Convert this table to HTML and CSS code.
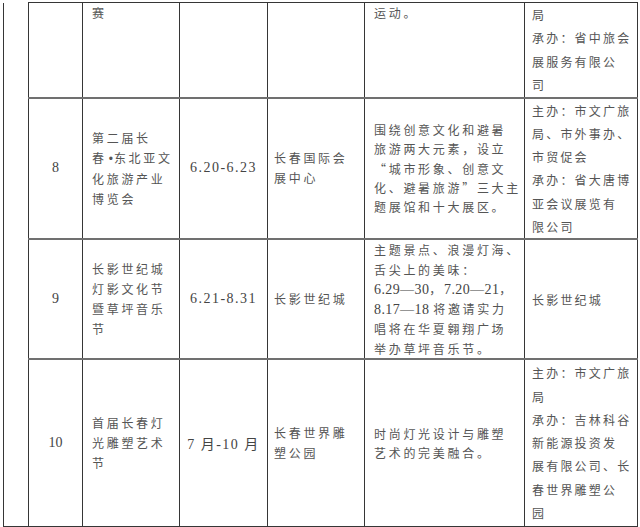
FILE: index.html
```html
<!DOCTYPE html>
<html lang="zh-CN">
<head>
<meta charset="utf-8">
<title>活动安排表</title>
<link rel="stylesheet" href="styles.css">
</head>
<body>
<table class="sched">
  <colgroup>
    <col class="c-side">
    <col class="c-no">
    <col class="c-name">
    <col class="c-date">
    <col class="c-loc">
    <col class="c-desc">
    <col class="c-org">
  </colgroup>
  <tbody>
    <tr class="r0">
      <td class="side" rowspan="4"></td>
      <td class="no"></td>
      <td class="name top">赛</td>
      <td class="date"></td>
      <td class="loc"></td>
      <td class="desc top">运动。</td>
      <td class="org">局<br>承办：省中旅会<br>展服务有限公<br>司</td>
    </tr>
    <tr class="r8">
      <td class="no">8</td>
      <td class="name">第二届长<br>春<span class="dot">•</span>东北亚文<br>化旅游产业<br>博览会</td>
      <td class="date">6.20-6.23</td>
      <td class="loc">长春国际会<br>展中心</td>
      <td class="desc">围绕创意文化和避暑<br>旅游两大元素，设立<br>“城市形象、创意文<br>化、避暑旅游”三大主<br>题展馆和十大展区。</td>
      <td class="org">主办：市文广旅<br>局、市外事办、<br>市贸促会<br>承办：省大唐博<br>亚会议展览有<br>限公司</td>
    </tr>
    <tr class="r9">
      <td class="no">9</td>
      <td class="name">长影世纪城<br>灯影文化节<br>暨草坪音乐<br>节</td>
      <td class="date">6.21-8.31</td>
      <td class="loc">长影世纪城</td>
      <td class="desc">主题景点、浪漫灯海、<br>舌尖上的美味：<br><span class="latin">6.29—30</span>，<span class="latin">7.20—21</span>，<br><span class="latin">8.17—18 </span>将邀请实力<br>唱将在华夏翱翔广场<br>举办草坪音乐节。</td>
      <td class="org">长影世纪城</td>
    </tr>
    <tr class="r10">
      <td class="no">10</td>
      <td class="name">首届长春灯<br>光雕塑艺术<br>节</td>
      <td class="date">7 月-10 月</td>
      <td class="loc">长春世界雕<br>塑公园</td>
      <td class="desc">时尚灯光设计与雕塑<br>艺术的完美融合。</td>
      <td class="org">主办：市文广旅<br>局<br>承办：吉林科谷<br>新能源投资发<br>展有限公司、长<br>春世界雕塑公<br>园</td>
    </tr>
  </tbody>
</table>
</body>
</html>
```

FILE: styles.css
```css
html, body {
  margin: 0;
  background: #ffffff;
}

body {
  padding: 2px 0 0 3px;
  font-family: "Noto Sans CJK SC", sans-serif;
  color: #555555;
}

.sched {
  border-collapse: collapse;
  table-layout: fixed;
  width: 634px;
}

.c-side { width: 25px; }
.c-no { width: 54px; }
.c-name { width: 97px; }
.c-date { width: 88px; }
.c-loc { width: 97px; }
.c-desc { width: 160px; }
.c-org { width: 113px; }

.sched td {
  border: 1px solid #363636;
  padding: 0;
  vertical-align: middle;
  white-space: nowrap;
  overflow: hidden;
}

.sched tr + tr td {
  border-top: 2px solid #707070;
}

.sched td.side {
  border-top: none;
}

.r0 { height: 95px; }
.r8 { height: 140px; }
.r9 { height: 116px; }
.r10 { height: 167px; }

.sched td.top {
  vertical-align: top;
}

.sched td.no {
  text-align: center;
  font-family: "Liberation Serif", serif;
  font-size: 14px;
  color: #444444;
}

.sched td.date {
  text-align: center;
  font-family: "Liberation Serif", "Noto Sans CJK SC", serif;
  font-size: 14px;
  letter-spacing: 1.5px;
  color: #444444;
}

.sched td.name,
.sched td.loc,
.sched td.desc,
.sched td.org {
  font-size: 12px;
  letter-spacing: 2.7px;
}

.sched td.name {
  padding-left: 9px;
  line-height: 20px;
}

.sched td.loc {
  padding-left: 6px;
  line-height: 20px;
}

.sched td.desc {
  padding-left: 9px;
  line-height: 19.3px;
}

.sched td.org {
  padding-left: 7px;
  letter-spacing: 2.2px;
  line-height: 23.3px;
}

.dot {
  font-family: "Liberation Sans", sans-serif;
  letter-spacing: 1px;
  margin-left: 2px;
}

.latin {
  font-family: "Liberation Serif", serif;
  font-size: 14px;
  letter-spacing: 0.4px;
  color: #444444;
}
```
